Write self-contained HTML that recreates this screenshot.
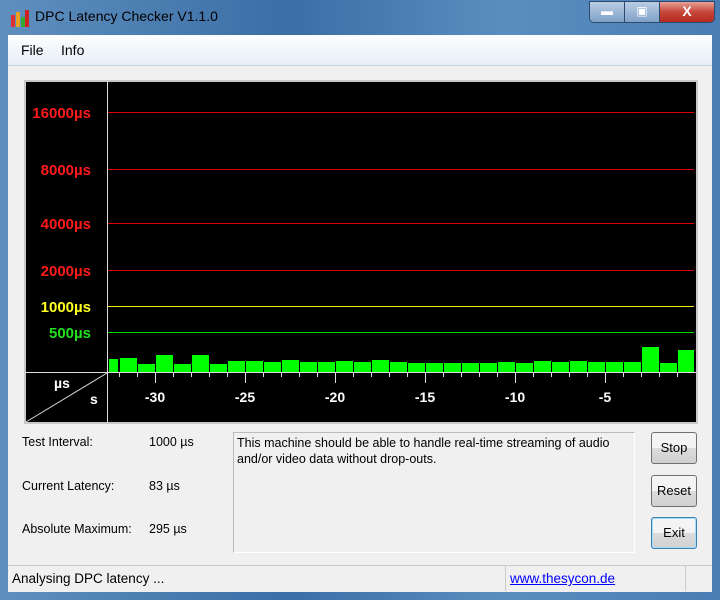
<!DOCTYPE html>
<html><head><meta charset="utf-8"><style>
body{margin:0;width:720px;height:600px;overflow:hidden;font-family:"Liberation Sans",sans-serif;}
.win{position:absolute;left:0;top:0;width:720px;height:600px;background:linear-gradient(90deg,#5f8fbf,#3a6ea5 40%,#5b8ec0 70%,#4a7db3);}
.title{position:absolute;left:35px;top:8px;font-size:14px;color:#000;}
.client{position:absolute;left:8px;top:35px;width:704px;height:557px;background:#f0f0f0;}
.menu{position:absolute;left:0;top:0;width:704px;height:30px;background:linear-gradient(#fdfeff,#e6eef7);border-bottom:1px solid #c8d2de;font-size:14px;}
.lbl{position:absolute;font-size:12.5px;color:#000;}
.btn{position:absolute;left:643px;width:44px;height:30px;border:1px solid #707070;border-radius:3px;background:linear-gradient(#f4f4f4 50%,#dcdcdc 50%,#d0d0d0);font-size:13px;text-align:center;line-height:30px;}
</style></head><body>
<div class="win">
<svg style="position:absolute;left:10px;top:9px" width="20" height="18"><rect x="1" y="6" width="4" height="12" fill="#d33"/><rect x="6" y="3" width="4" height="15" fill="#e7a020"/><rect x="11" y="8" width="4" height="10" fill="#3a3"/><rect x="15" y="1" width="4" height="17" fill="#c22"/></svg>
<div class="title">DPC Latency Checker V1.1.0</div>
<div style="position:absolute;left:589px;top:1px;width:124px;height:20px;border:1px solid #2c4a70;border-radius:0 0 5px 5px;overflow:hidden;display:flex">
<div style="width:34px;background:linear-gradient(#b9cde4,#7fa1c8);border-right:1px solid #2c4a70;color:#fff;text-align:center;font-size:12px;line-height:18px">▬</div>
<div style="width:34px;background:linear-gradient(#b9cde4,#7fa1c8);border-right:1px solid #2c4a70;color:#fff;text-align:center;font-size:12px;line-height:18px">▣</div>
<div style="flex:1;background:linear-gradient(#e8a195,#c7463a 50%,#b82a1e);color:#fff;text-align:center;font-weight:bold;font-size:14px;line-height:19px">X</div></div>
<div class="client">
<div class="menu"><span style="position:absolute;left:13px;top:7px">File</span><span style="position:absolute;left:53px;top:7px">Info</span></div>
<svg style="position:absolute;left:16px;top:45px" width="674" height="344" shape-rendering="crispEdges">
<rect x="0" y="0" width="674" height="344" fill="#c8c8c8"/>
<rect x="2" y="2" width="670" height="340" fill="#000"/>
<g font-family="Liberation Sans" font-weight="bold" font-size="15" text-anchor="end">
<text x="67" y="38" fill="#ff1a1a">16000µs</text>
<text x="67" y="95" fill="#ff1a1a">8000µs</text>
<text x="67" y="149" fill="#ff1a1a">4000µs</text>
<text x="67" y="196" fill="#ff1a1a">2000µs</text>
<text x="67" y="232" fill="#ffff20">1000µs</text>
<text x="67" y="258" fill="#20e020">500µs</text>
</g>
<rect x="84" y="32" width="586" height="1" fill="#d00"/>
<rect x="84" y="89" width="586" height="1" fill="#d00"/>
<rect x="84" y="143" width="586" height="1" fill="#d00"/>
<rect x="84" y="190" width="586" height="1" fill="#d00"/>
<rect x="84" y="226" width="586" height="1" fill="#ee0"/>
<rect x="84" y="252" width="586" height="1" fill="#0d0"/>
<g fill="#00ff00" id="bars"></g>
<rect x="83" y="2" width="1" height="340" fill="#ddd"/>
<rect x="2" y="292" width="670" height="1" fill="#ddd"/>
<line x1="2" y1="342" x2="83" y2="293" stroke="#ddd" shape-rendering="auto"/>
<g fill="#ddd" id="ticks"></g>
<g font-family="Liberation Sans" font-weight="bold" font-size="14" fill="#fff">
<text x="30" y="308">µs</text><text x="66" y="324">s</text>
<g text-anchor="middle"><text x="131" y="322">-30</text><text x="221" y="322">-25</text><text x="311" y="322">-20</text><text x="401" y="322">-15</text><text x="491" y="322">-10</text><text x="581" y="322">-5</text></g>
</g>
</svg>
<div class="lbl" style="left:14px;top:400px">Test Interval:</div><div class="lbl" style="left:141px;top:400px">1000 µs</div>
<div class="lbl" style="left:14px;top:444px">Current Latency:</div><div class="lbl" style="left:141px;top:444px">83 µs</div>
<div class="lbl" style="left:14px;top:487px">Absolute Maximum:</div><div class="lbl" style="left:141px;top:487px">295 µs</div>
<div style="position:absolute;left:225px;top:397px;width:394px;height:115px;border:1px solid #bbb;border-right-color:#fff;border-bottom-color:#fff;font-size:12.5px;padding:2px 3px;line-height:16px">This machine should be able to handle real-time streaming of audio and/or video data without drop-outs.</div>
<div class="btn" style="top:397px">Stop</div>
<div class="btn" style="top:440px">Reset</div>
<div class="btn" style="top:482px;border-color:#3c7fb1;box-shadow:inset 0 0 0 1px #9fe0f8">Exit</div>
<div style="position:absolute;left:0;top:530px;width:704px;height:25px;border-top:1px solid #ccc;background:#f0f0f0;font-size:13.5px">
<span style="position:absolute;left:4px;top:5px">Analysing DPC latency ...</span>
<span style="position:absolute;left:497px;top:0;height:25px;border-left:1px solid #ccc"></span>
<span style="position:absolute;left:502px;top:5px;color:#00f;text-decoration:underline">www.thesycon.de</span>
<span style="position:absolute;left:677px;top:0;height:25px;border-left:1px solid #ccc"></span>
</div>
</div></div>
<script>
var tops=[359,358,364,355,364,355,364,361,361,362,360,362,362,361,362,360,362,363,363,363,363,363,362,363,361,362,361,362,362,362,347,363,350];
var g=document.getElementById('bars'),s='';
for(var i=0;i<tops.length;i++){var x0=i==0?109:102+18*i,x1=i==0?118:x0+17;if(x1>694)x1=694;var t=tops[i]-80;s+='<rect x="'+(x0-24)+'" y="'+t+'" width="'+(x1-x0)+'" height="'+(292-t)+'"/>';}
g.innerHTML=s;
var tk=document.getElementById('ticks'),u='';
for(var x=95;x<668;x+=18){var maj=(((x-131)%90)+90)%90==0;u+='<rect x="'+x+'" y="293" width="1" height="'+(maj?10:4)+'"/>';}
tk.innerHTML=u;
</script>
</body></html>
